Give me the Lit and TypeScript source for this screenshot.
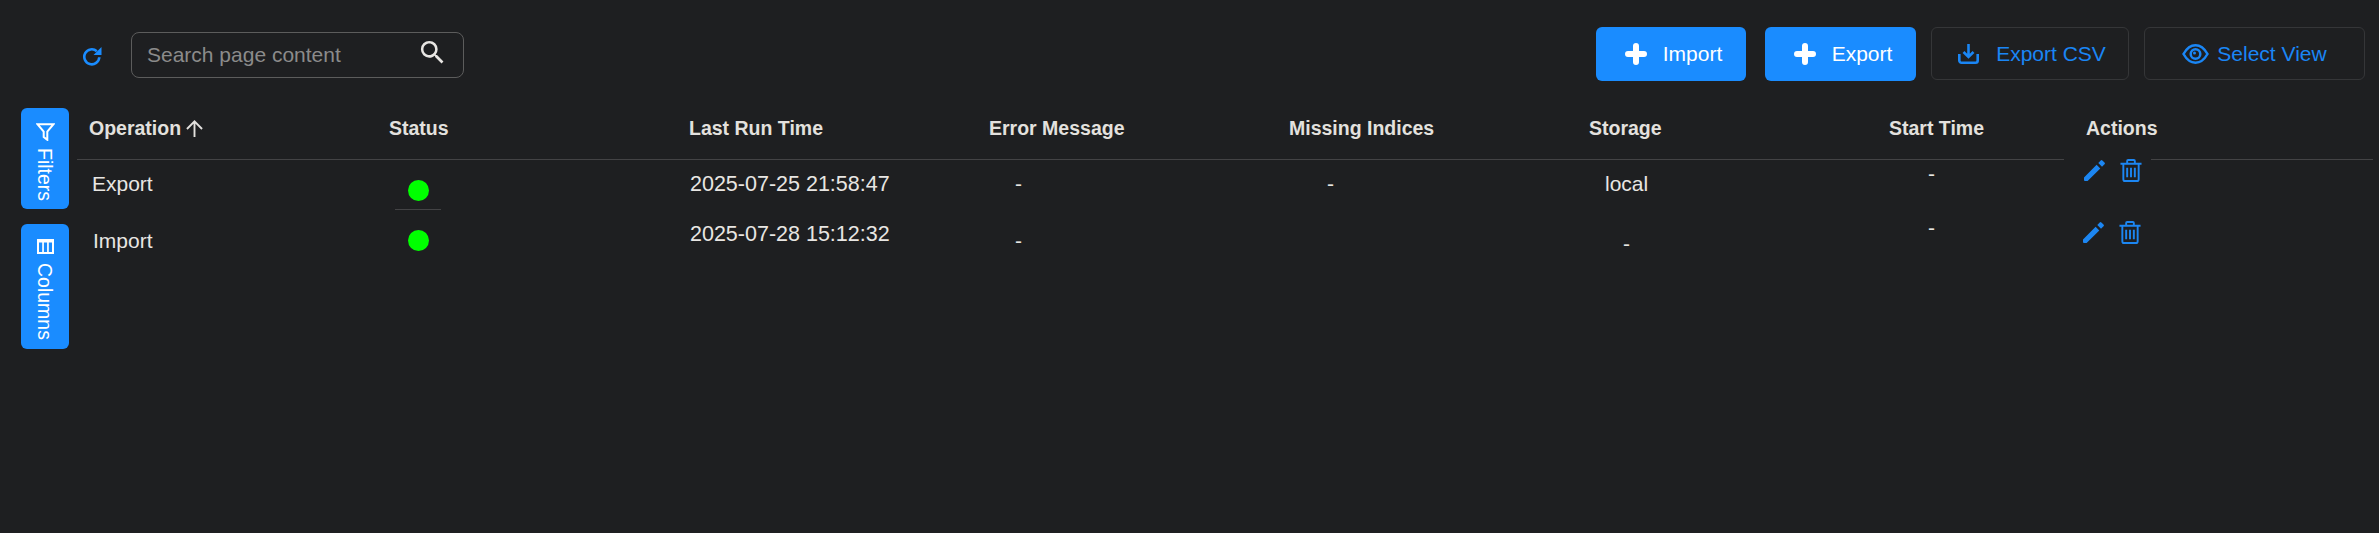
import { LitElement, html, css } from "lit";
import { customElement } from "lit/decorators.js";

const refreshIcon = html`<svg class="refresh" viewBox="0 0 20 20"><path d="M14.800 5.200A7.500 7.500 0 1 0 17.300 11.200" fill="none" stroke="currentColor" stroke-width="2.600"/><path d="M11.500 9h8V1z" fill="currentColor"/></svg>`;
const searchIcon = html`<svg class="search-icon" viewBox="0 0 24 24"><path fill="currentColor" d="M15.500 14h-.79l-.28-.27A6.470 6.470 0 0 0 16 9.500 6.500 6.500 0 1 0 9.500 16c1.610 0 3.090-.59 4.230-1.570l.27.28v.79l5 4.990L20.490 19l-4.990-5zm-6 0C7.010 14 5 11.990 5 9.500S7.010 5 9.500 5 14 7.010 14 9.500 11.990 14 9.500 14z"/></svg>`;
const plusIcon = html`<svg class="plus" viewBox="0 0 22 22" fill="none" stroke="currentColor" stroke-width="6" stroke-linecap="round"><path d="M11 3v16M3 11h16"/></svg>`;
const downloadIcon = html`<svg class="dl" viewBox="0 0 21 20" fill="none" stroke="currentColor" stroke-width="2.600"><path d="M10.500 0v13M5.500 8l5 5 5-5" /><path d="M1.300 10v6.500a2.200 2.200 0 0 0 2.200 2.200h14a2.200 2.200 0 0 0 2.200-2.200V10"/></svg>`;
const eyeIcon = html`<svg class="eye" viewBox="0 0 27 20" fill="none" stroke="currentColor" stroke-width="2.500"><path d="M1.500 10C5 3.800 9 1.300 13.500 1.300S22 3.800 25.500 10C22 16.200 18 18.700 13.500 18.700S5 16.200 1.500 10z"/><circle cx="13.500" cy="10" r="4.800"/><circle cx="12.500" cy="9" r="1.500" fill="currentColor" stroke="none"/></svg>`;
const filterIcon = html`<svg class="tab-icon filter" viewBox="0 0 19 18" fill="none" stroke="currentColor" stroke-width="2"><path d="M1.500 1.200h16L11.300 8.500v8.300L7.700 14V8.500z"/></svg>`;
const columnsIcon = html`<svg class="tab-icon cols" viewBox="0 0 17 15"><path fill="currentColor" fill-rule="evenodd" d="M0 0h17v15H0zM2 3.500V13h3.200V3.500zm4.900 0V13h3.200V3.500zm4.900 0V13H15V3.500z"/></svg>`;
const arrowUp = html`<svg class="arrow" viewBox="0 0 18 18" fill="none" stroke="currentColor" stroke-width="2"><path d="M9 18V1.500M1 9.500l8-8 8 8"/></svg>`;
const pencilIcon = html`<svg class="pencil" viewBox="0 0 21 21"><path fill="currentColor" d="M0 17.500 12.600 4.800l3.700 3.700L3.600 21H1a1 1 0 0 1-1-1zM14.300 3l2.400-2.500a1.200 1.200 0 0 1 1.700 0l2.100 2.100a1.200 1.200 0 0 1 0 1.700L18 6.700z"/></svg>`;
const trashIcon = html`<svg class="trash" viewBox="0 0 22 24" fill="none" stroke="currentColor" stroke-width="2"><path d="M0 5h22M7 5V2a1 1 0 0 1 1-1h6a1 1 0 0 1 1 1v3M3 5v16a2 2 0 0 0 2 2h12a2 2 0 0 0 2-2V5M7 9v10M11 9v10M15 9v10"/></svg>`;

@customElement("app-root")
export class AppRoot extends LitElement {
  static styles = css`
    :host {
      display: block;
      min-height: 533px;
      background: #1e1f21;
      font-family: "Liberation Sans", Arial, sans-serif;
      color: #e8e6e3;
      overflow: hidden;
    }
    svg { display: block; flex: none; }

    .toolbar { display: flex; align-items: flex-start; height: 108px; box-sizing: border-box; padding: 27px 14px 0 82px; }
    .refresh { width: 20px; height: 20px; color: #1a8cff; margin-top: 19px; margin-right: 29px; }
    .search {
      width: 333px; height: 46px; box-sizing: border-box; margin-top: 5px;
      border: 1px solid #5c5c5c; border-radius: 8px;
      display: flex; align-items: center; justify-content: space-between;
      padding: 0 15px 0 15px; color: #8b8b8b; font-size: 21px;
    }
    .search-icon { width: 31px; height: 31px; color: #e8e6e3; margin-top: -6px; }
    .actions-bar { margin-left: auto; display: flex; gap: 15px; }
    .btn {
      height: 53px; box-sizing: border-box; border-radius: 6px; font-size: 21px;
      display: flex; align-items: center; justify-content: center;
    }
    .primary { background: #1a8cff; color: #fff; height: 54px; padding-left: 5px; }
    .outline { border: 1px solid #353638; color: #1a86f5; }
    .b-import { width: 150px; gap: 16px; margin-right: 4px; }
    .b-export { width: 151px; gap: 16px; }
    .b-csv { width: 198px; gap: 17px; padding-left: 4px; }
    .b-view { width: 221px; gap: 8px; }
    .plus { width: 22px; height: 22px; }
    .dl { width: 21px; height: 20px; }
    .eye { width: 27px; height: 20px; }

    .main { display: flex; }
    .tabs { width: 48px; margin-left: 21px; margin-right: 8px; display: flex; flex-direction: column; gap: 15px; flex: none; }
    .tab {
      width: 48px; box-sizing: border-box; background: #1a8cff; color: #fff; border-radius: 6px;
      display: flex; flex-direction: column; align-items: center; padding-top: 15px; font-size: 19.500px;
    }
    .tab-filter { height: 101px; gap: 7px; }
    .tab-columns { height: 125px; gap: 9px; }
    .tab-text { writing-mode: vertical-rl; line-height: 20px; }
    .filter { width: 19px; height: 18px; }
    .cols { width: 17px; height: 15px; }

    .table { flex: 1; margin-right: 6px; min-width: 0; }
    .head, .body { display: grid; grid-template-columns: repeat(6, 300px) 187px 1fr; }
    .head { height: 52px; box-sizing: border-box; border-bottom: 1px solid #434345; }
    .th {
      font-weight: 700; font-size: 19.500px; padding: 9px 0 0 12px; line-height: 22px;
      display: flex; align-items: center; gap: 5px; height: 22px; color: #e3e1de;
    }
    .th-actions { padding-left: 22px; }
    .arrow { width: 17px; height: 17px; }

    .col { font-size: 21px; line-height: 24px; color: #e8e6e3; }
    .op1 { padding: 12px 0 0 15px; height: 57px; }
    .op2 { padding: 0 0 0 16px; }
    .st { display: flex; flex-direction: column; align-items: center; width: 46px; margin-left: 18px; }
    .st1 { padding-top: 20px; height: 29px; width: 46px; border-bottom: 1px solid #434345; display: flex; justify-content: center; }
    .st2 { padding-top: 20px; }
    .dot { width: 21px; height: 21px; border-radius: 50%; background: #00ff00; }
    .date { font-size: 21.500px; }
    .date1 { padding: 12px 0 0 13px; height: 50px; }
    .date2 { padding: 0 0 0 13px; }
    .err1 { padding: 12px 0 0 38px; height: 57px; }
    .err2 { padding: 0 0 0 38px; }
    .miss1 { padding: 12px 0 0 50px; }
    .stor1 { padding: 12px 0 0 28px; height: 60px; }
    .stor2 { padding: 0 0 0 46px; }
    .start1 { padding: 2px 0 0 51px; height: 54px; }
    .start2 { padding: 0 0 0 51px; }
    .acts { display: flex; align-items: center; width: 87px; box-sizing: border-box; }
    .acts1 { background: #1e1f21; height: 23px; margin-top: -1px; padding-left: 20px; gap: 15px; position: relative; }
    .acts2 { margin-top: 39px; padding-left: 19px; gap: 15px; }
    .pencil { width: 21px; height: 21px; color: #1c86f2; }
    .trash { width: 22px; height: 23px; color: #1c86f2; }
  `;

  render() {
    return html`
      <div class="toolbar">
        ${refreshIcon}
        <div class="search"><span>Search page content</span>${searchIcon}</div>
        <div class="actions-bar">
          <div class="btn primary b-import">${plusIcon}<span>Import</span></div>
          <div class="btn primary b-export">${plusIcon}<span>Export</span></div>
          <div class="btn outline b-csv">${downloadIcon}<span>Export CSV</span></div>
          <div class="btn outline b-view">${eyeIcon}<span>Select View</span></div>
        </div>
      </div>
      <div class="main">
        <div class="tabs">
          <div class="tab tab-filter">${filterIcon}<span class="tab-text">Filters</span></div>
          <div class="tab tab-columns">${columnsIcon}<span class="tab-text">Columns</span></div>
        </div>
        <div class="table">
          <div class="head">
            <div class="th">Operation${arrowUp}</div>
            <div class="th">Status</div>
            <div class="th">Last Run Time</div>
            <div class="th">Error Message</div>
            <div class="th">Missing Indices</div>
            <div class="th">Storage</div>
            <div class="th">Start Time</div>
            <div class="th th-actions">Actions</div>
          </div>
          <div class="body">
            <div class="col"><div class="op1">Export</div><div class="op2">Import</div></div>
            <div class="col"><div class="st"><div class="st1"><div class="dot"></div></div><div class="st2"><div class="dot"></div></div></div></div>
            <div class="col date"><div class="date1">2025-07-25 21:58:47</div><div class="date2">2025-07-28 15:12:32</div></div>
            <div class="col"><div class="err1">-</div><div class="err2">-</div></div>
            <div class="col"><div class="miss1">-</div></div>
            <div class="col"><div class="stor1">local</div><div class="stor2">-</div></div>
            <div class="col"><div class="start1">-</div><div class="start2">-</div></div>
            <div class="col">
              <div class="acts acts1">${pencilIcon}${trashIcon}</div>
              <div class="acts acts2">${pencilIcon}${trashIcon}</div>
            </div>
          </div>
        </div>
      </div>
    `;
  }
}
